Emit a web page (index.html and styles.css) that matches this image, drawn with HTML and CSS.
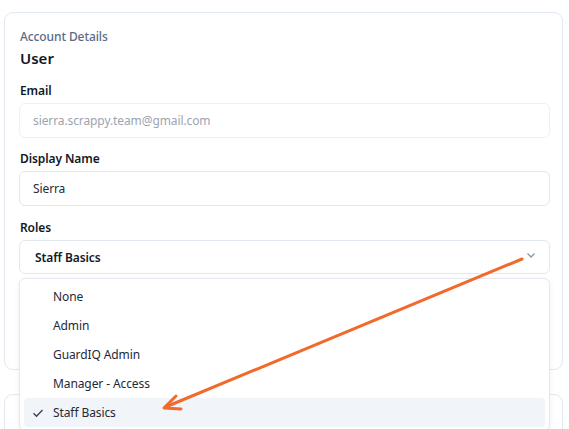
FILE: index.html
```html
<!DOCTYPE html>
<html>
<head>
  <meta charset="UTF-8">
  <meta name="viewport" content="width=device-width, initial-scale=1.0">
  <title>Account Details</title>
  <link rel="stylesheet" href="styles.css">
</head>
<body>
  <div class="page">
    <section class="card">
      <p class="eyebrow">Account Details</p>
      <h2 class="title">User</h2>

      <div class="field">
        <label class="label">Email</label>
        <div class="input input-disabled">sierra.scrappy.team@gmail.com</div>
      </div>

      <div class="field">
        <label class="label">Display Name</label>
        <div class="input">Sierra</div>
      </div>

      <div class="field">
        <label class="label">Roles</label>
        <div class="select-wrap">
          <div class="select">
            <span>Staff Basics</span>
            <svg class="chevron" width="12" height="12" viewBox="0 0 12 12">
              <path d="M2.5 4.5 L6 8 L9.5 4.5" fill="none" stroke="#8a94a6" stroke-width="1.3"/>
            </svg>
          </div>
          <ul class="menu">
            <li class="option">None</li>
            <li class="option">Admin</li>
            <li class="option">GuardIQ Admin</li>
            <li class="option">Manager - Access</li>
            <li class="option selected">
              <svg class="check" width="12" height="12" viewBox="0 0 12 12">
                <path d="M1.5 6.2 L4.5 9.2 L10.5 3" fill="none" stroke="#334155" stroke-width="1.3"/>
              </svg>
              Staff Basics
            </li>
          </ul>
        </div>
      </div>
    </section>

    <section class="card card-next"></section>
  </div>

  <!-- annotation arrow drawn over the screenshot -->
  <svg class="annotation" width="569" height="429" viewBox="0 0 569 429">
    <line x1="522" y1="259" x2="168" y2="406" stroke="#f26a2b" stroke-width="3" stroke-linecap="round"/>
    <path d="M176 396 L164 408 L181 409" fill="none" stroke="#f26a2b" stroke-width="3" stroke-linecap="round" stroke-linejoin="round"/>
  </svg>
</body>
</html>
```

FILE: styles.css
```css
* {
  margin: 0;
  padding: 0;
  box-sizing: border-box;
  font-family: "Noto Sans", "Open Sans", sans-serif;
}
body {
  background-color: #fff;
  color: #111827;
  overflow: hidden;
}
.page {
  padding: 12px 6px 0 4px;
}
.card {
  border: 1px solid #e2e8f0;
  border-radius: 9px;
  background-color: #fff;
  padding: 15px 12px 0 14px;
  height: 358px;
}
.card-next {
  margin-top: 24px;
  height: 60px;
}
.eyebrow {
  color: #5b6b82;
  font-size: 12px;
  font-weight: 500;
  letter-spacing: -0.1px;
  line-height: 18px;
  padding-left: 1px;
}
.title {
  font-size: 15px;
  font-weight: 600;
  line-height: 22px;
  margin-top: 1px;
  padding-left: 1px;
}
.field {
  margin-top: 13px;
}
.field + .field {
  margin-top: 12px;
}
.field:last-child {
  margin-top: 13px;
}
.label {
  display: block;
  font-size: 12px;
  font-weight: 600;
  letter-spacing: -0.1px;
  line-height: 18px;
  margin-bottom: 3px;
  padding-left: 1px;
}
.input {
  height: 35px;
  border: 1px solid #e2e8f0;
  border-radius: 6px;
  padding: 0 13px;
  display: flex;
  align-items: center;
  font-size: 12px;
  letter-spacing: -0.1px;
  color: #1f2937;
}
.input-disabled {
  color: #9ca3af;
  border-color: #edf1f5;
}
.select-wrap {
  position: relative;
}
.select {
  height: 34px;
  border: 1px solid #e2e8f0;
  border-radius: 6px;
  padding: 0 12px 0 15px;
  display: flex;
  align-items: center;
  justify-content: space-between;
  font-size: 12px;
  font-weight: 600;
  letter-spacing: -0.1px;
}
.chevron {
  margin-top: -4px;
}
.menu {
  position: absolute;
  top: 38px;
  left: 0;
  right: 0;
  list-style: none;
  background-color: #fff;
  border: 1px solid #e2e8f0;
  border-radius: 6px;
  padding: 3px 4px;
  box-shadow: 0 2px 6px rgba(15, 23, 42, 0.06);
}
.option {
  position: relative;
  height: 29px;
  padding-left: 29px;
  display: flex;
  align-items: center;
  font-size: 12px;
  letter-spacing: -0.1px;
  color: #1f2937;
  border-radius: 4px;
}
.option.selected {
  background-color: #f1f5f9;
}
.check {
  position: absolute;
  left: 8px;
  top: 9px;
}
.annotation {
  position: absolute;
  top: 0;
  left: 0;
  pointer-events: none;
}
```
